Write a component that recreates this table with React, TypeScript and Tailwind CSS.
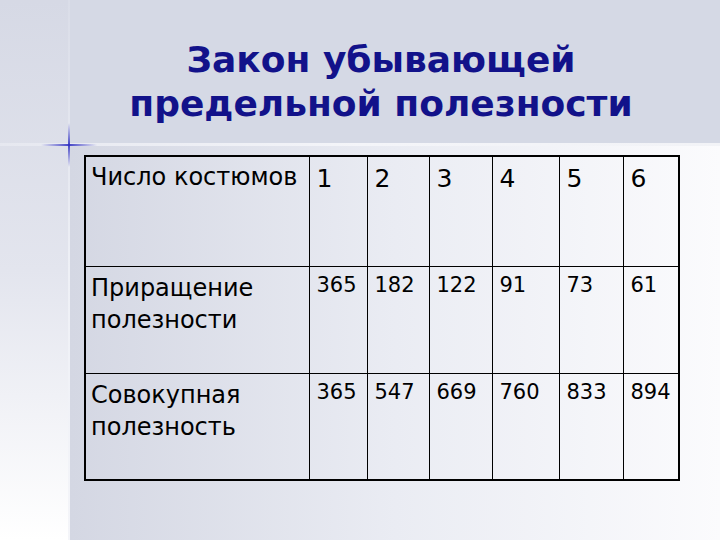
const header = ["1", "2", "3", "4", "5", "6"];

const rows = [
  { label: ["Приращение", "полезности"], values: ["365", "182", "122", "91", "73", "61"] },
  { label: ["Совокупная", "полезность"], values: ["365", "547", "669", "760", "833", "894"] },
];

const colWidths = ["w-[224px]", "w-[58px]", "w-[62px]", "w-[63px]", "w-[67px]", "w-[64px]", "w-[56px]"];

function Sparkle() {
  return (
    <svg
      className="absolute left-[39px] top-[115px] pointer-events-none"
      width="60"
      height="60"
      viewBox="0 0 60 60"
    >
      <defs>
        <linearGradient id="sh" x1="0" x2="1" y1="0" y2="0">
          <stop offset="0" stopColor="#3535c8" stopOpacity="0" />
          <stop offset="0.5" stopColor="#3030c0" stopOpacity="0.9" />
          <stop offset="1" stopColor="#3535c8" stopOpacity="0" />
        </linearGradient>
        <linearGradient id="sv" x1="0" x2="0" y1="0" y2="1">
          <stop offset="0" stopColor="#3535c8" stopOpacity="0" />
          <stop offset="0.5" stopColor="#3030c0" stopOpacity="0.9" />
          <stop offset="1" stopColor="#3535c8" stopOpacity="0" />
        </linearGradient>
      </defs>
      <rect x="2" y="29" width="56" height="2" fill="url(#sh)" />
      <rect x="29" y="8" width="2" height="44" fill="url(#sv)" />
    </svg>
  );
}

export default function App() {
  return (
    <div className="relative w-[720px] h-[540px] overflow-hidden flex font-['DejaVu_Sans',sans-serif]">
      {/* left strip */}
      <div className="w-[68px] h-full bg-gradient-to-b from-[#d6d9e5] via-[#e3e5ee] to-white" />
      <div className="w-[2px] h-full bg-gradient-to-b from-[#dadde8] via-[#eef0f6] to-[#f4f5f9]" />

      <div className="flex-1 flex flex-col">
        <div className="h-[143px] bg-[#d5d9e5] flex flex-col items-center pr-[28px] pt-[38px]">
          <h1 className="text-[#12128a] font-bold text-[36px] leading-[44px] text-center">
            Закон убывающей
            <br />
            предельной полезности
          </h1>
        </div>
        <div className="h-[3px] bg-[#f2f3f7]" />
        <div className="flex-1 bg-gradient-to-r from-[#d4d7e3] via-[#eaecf3] to-[#fbfbfd] pl-[14px] pt-[9px]">
          <table className="border-collapse border-2 border-black text-black">
            <tbody>
              <tr className="h-[110px]">
                <td className={`${colWidths[0]} border border-black align-top pl-[5px] pt-[4px] text-[24px] leading-[32px] whitespace-nowrap`}>
                  Число костюмов
                </td>
                {header.map((h, i) => (
                  <td
                    key={h}
                    className={`${colWidths[i + 1]} border border-black align-top pl-[7px] pt-[6px] text-[25px] leading-[32px]`}
                  >
                    {h}
                  </td>
                ))}
              </tr>
              {rows.map((r) => (
                <tr key={r.label[0]} className="h-[107px]">
                  <td className="border border-black align-top pl-[5px] pt-[5px] text-[24px] leading-[32px] whitespace-nowrap">
                    {r.label[0]}
                    <br />
                    {r.label[1]}
                  </td>
                  {r.values.map((v, i) => (
                    <td
                      key={i}
                      className="border border-black align-top pl-[7px] pt-[3px] text-[21px] leading-[30px]"
                    >
                      {v}
                    </td>
                  ))}
                </tr>
              ))}
            </tbody>
          </table>
        </div>
      </div>

      {/* decorative guide line across the slide */}
      <div className="absolute left-0 top-[143px] w-full h-[3px] bg-gradient-to-r from-[#e6e8f0] via-[#f4f5f9] to-[#f2f3f7] pointer-events-none" />
      <Sparkle />
    </div>
  );
}
